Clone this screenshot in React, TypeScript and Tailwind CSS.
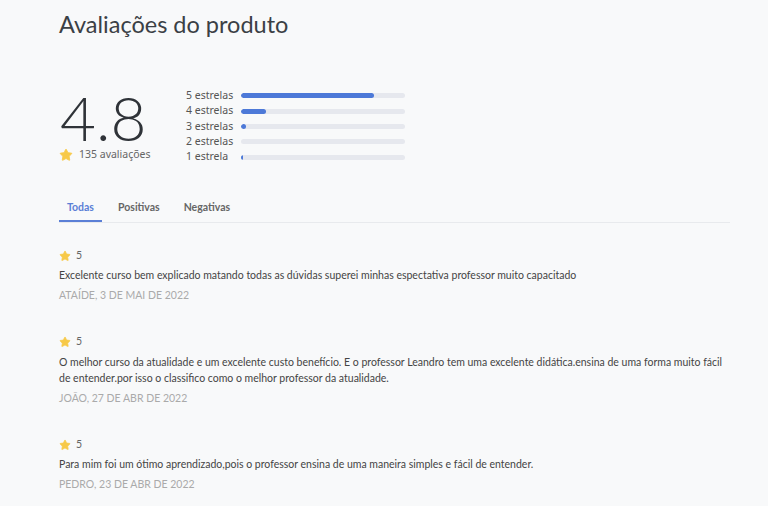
import { Star } from "lucide-react";

const bars = [
  { label: "5 estrelas", pct: 81 },
  { label: "4 estrelas", pct: 15 },
  { label: "3 estrelas", pct: 3 },
  { label: "2 estrelas", pct: 0 },
  { label: "1 estrela", pct: 1 },
];

const reviews = [
  {
    text: "Excelente curso bem explicado matando todas as dúvidas superei minhas espectativa professor muito capacitado",
    meta: "Ataíde, 3 de mai de 2022",
  },
  {
    text: "O melhor curso da atualidade e um excelente custo benefício. E o professor Leandro tem uma excelente didática.ensina de uma forma muito fácil de entender.por isso o classifico como o melhor professor da atualidade.",
    meta: "João, 27 de abr de 2022",
  },
  {
    text: "Para mim foi um ótimo aprendizado,pois o professor ensina de uma maneira simples e fácil de entender.",
    meta: "Pedro, 23 de abr de 2022",
  },
];

function YellowStar({ size }: { size: number }) {
  return <Star size={size} className="text-[#f7c948]" fill="currentColor" strokeWidth={1.5} strokeLinejoin="round" />;
}

export default function App() {
  return (
    <div className="min-h-screen bg-[#f8f9fa] pl-[59px] pr-[38px] font-['Lato',sans-serif] text-[#444]">
      <h1 className="pt-[9px] text-[23.5px] leading-[30px] text-[#3b4045]">Avaliações do produto</h1>

      <div className="mt-[49px] flex items-start">
        <div className="flex w-[127px] flex-col">
          <div className="ml-[1px] mt-[-2px] h-[62px] text-[62px] leading-[62px] font-light text-[#2f3338]">4.8</div>
          <div className="flex h-[14px] items-center gap-[6px] font-['Noto_Sans',sans-serif] text-[10.5px] text-[#666]">
            <YellowStar size={14} />
            <span>135 avaliações</span>
          </div>
        </div>
        <div className="flex flex-col">
          {bars.map((b) => (
            <div key={b.label} className="flex h-[15.4px] items-center">
              <span className="w-[55px] font-['Noto_Sans',sans-serif] text-[10.5px] text-[#555]">{b.label}</span>
              <div className="h-[5px] w-[164px] overflow-hidden rounded-full bg-[#e6e8ee]">
                <div className="h-full rounded-full bg-[#4d79d8]" style={{ width: `${b.pct}%` }} />
              </div>
            </div>
          ))}
        </div>
      </div>

      <div className="mt-[31px] flex border-b border-[#e8eaed] text-[10.5px] font-bold">
        <div className="w-[43px] border-b-2 border-[#5b7fd6] pb-[4px] pt-[4px] text-center text-[#5b7fd6]">Todas</div>
        <div className="ml-[16px] pb-[4px] pt-[4px] text-[#666]">Positivas</div>
        <div className="ml-[24px] pb-[4px] pt-[4px] text-[#666]">Negativas</div>
      </div>

      <div className="mt-[25px] flex flex-col gap-[30px]">
        {reviews.map((r) => (
          <div key={r.meta} className="flex flex-col">
            <div className="flex items-center gap-[5px] text-[10.5px] text-[#666]">
              <YellowStar size={12} />
              <span>5</span>
            </div>
            <p className="mt-[4px] text-[10.5px] leading-[16px] text-[#444]">{r.text}</p>
            <div className="mt-[5px] text-[10.5px] uppercase text-[#aaa]">{r.meta}</div>
          </div>
        ))}
      </div>
    </div>
  );
}
